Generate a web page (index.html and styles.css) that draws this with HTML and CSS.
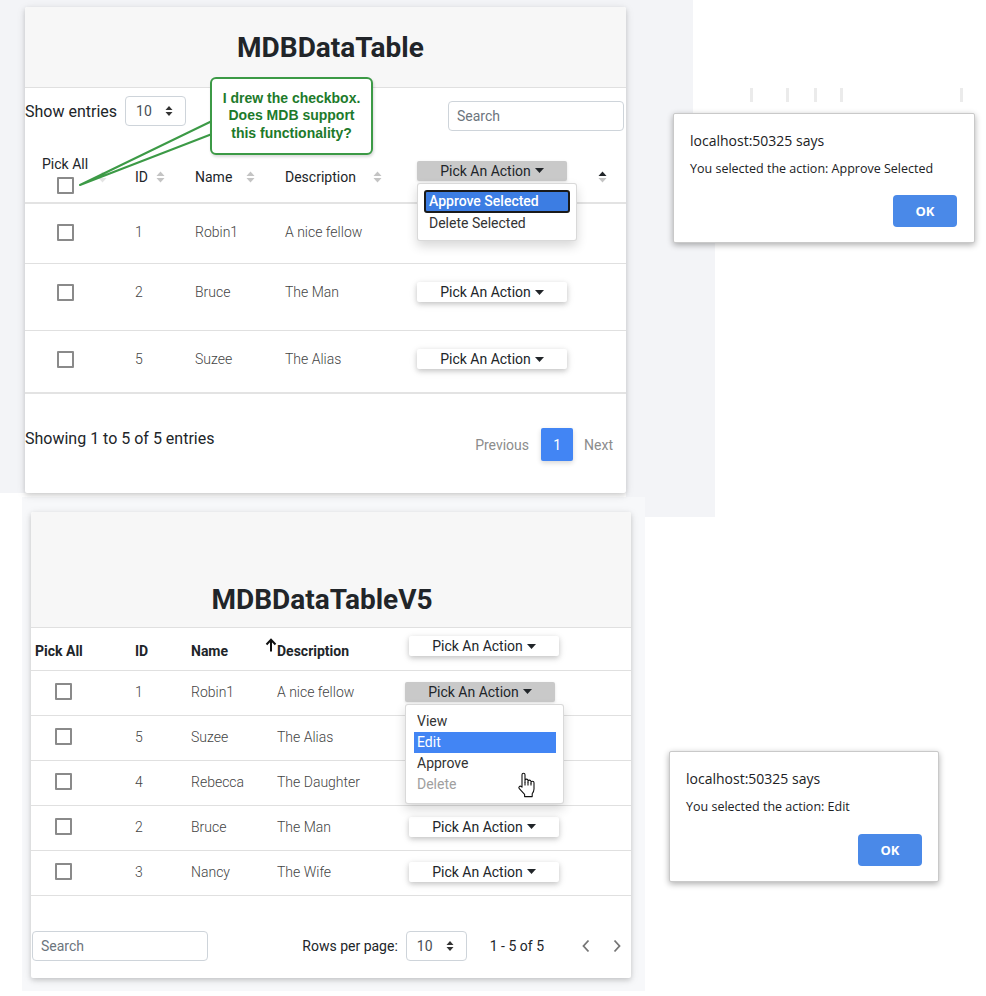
FILE: index.html
```html
<!DOCTYPE html>
<html lang="en">
<head>
<meta charset="utf-8">
<title>MDBDataTable row actions</title>
<link rel="stylesheet" href="styles.css">
</head>
<body>
<div class="canvas">
  <div class="backdrop backdrop--top"></div>
  <div class="backdrop backdrop--side"></div>
  <div class="backdrop backdrop--bottom"></div>

  <!-- Classic MDBDataTable -->
  <section class="card dt1">
    <header class="card-head dt1-head"><h1 class="card-title">MDBDataTable</h1></header>

    <div class="dt1-controls">
      <div class="entries">
        <span>Show entries</span>
        <span class="select">10
          <svg class="select-caret" viewBox="0 0 8 12" width="8" height="12"><path d="M0.5 5 L4 1 L7.5 5Z"/><path d="M0.5 7 L4 11 L7.5 7Z"/></svg>
        </span>
      </div>
      <input class="search dt1-search" type="text" placeholder="Search">
    </div>

    <div class="dt1-row dt1-row--head">
      <div class="dt1-cell dt1-pick">
        <div class="pick-stack">
          <span>Pick All</span>
          <span class="checkbox pick-box"></span>
        </div>
        <svg class="sort sort--faint" viewBox="0 0 9 14" width="9" height="14"><path d="M0.5 6 L4.5 1.5 L8.5 6Z"/><path d="M0.5 8 L4.5 12.5 L8.5 8Z"/></svg>
      </div>
      <div class="dt1-cell dt1-sortable">ID
        <svg class="sort" viewBox="0 0 9 14" width="9" height="14"><path d="M0.5 6 L4.5 1.5 L8.5 6Z"/><path d="M0.5 8 L4.5 12.5 L8.5 8Z"/></svg>
      </div>
      <div class="dt1-cell dt1-sortable">Name
        <svg class="sort" viewBox="0 0 9 14" width="9" height="14"><path d="M0.5 6 L4.5 1.5 L8.5 6Z"/><path d="M0.5 8 L4.5 12.5 L8.5 8Z"/></svg>
      </div>
      <div class="dt1-cell dt1-sortable">Description
        <svg class="sort" viewBox="0 0 9 14" width="9" height="14"><path d="M0.5 6 L4.5 1.5 L8.5 6Z"/><path d="M0.5 8 L4.5 12.5 L8.5 8Z"/></svg>
      </div>
      <div class="dt1-cell dt1-action-head">
        <button class="action-btn action-btn--active action-btn--head">Pick An Action
          <svg class="btn-caret" viewBox="0 0 9 5" width="9" height="5"><path d="M0 0 H9 L4.5 5Z"/></svg>
        </button>
        <svg class="sort sort--on" viewBox="0 0 9 14" width="9" height="14"><path class="sort-up" d="M0.5 6 L4.5 1.5 L8.5 6Z"/><path d="M0.5 8 L4.5 12.5 L8.5 8Z"/></svg>
      </div>
    </div>

    <div class="dt1-row dt1-row--body dt1-row--h60">
      <div class="dt1-cell"><span class="checkbox dt1-box"></span></div>
      <div class="dt1-cell">1</div>
      <div class="dt1-cell">Robin1</div>
      <div class="dt1-cell">A nice fellow</div>
      <div class="dt1-cell dt1-action"></div>
    </div>
    <div class="dt1-row dt1-row--body dt1-row--h67">
      <div class="dt1-cell"><span class="checkbox dt1-box"></span></div>
      <div class="dt1-cell">2</div>
      <div class="dt1-cell">Bruce</div>
      <div class="dt1-cell">The Man</div>
      <div class="dt1-cell dt1-action">
        <button class="action-btn">Pick An Action
          <svg class="btn-caret" viewBox="0 0 9 5" width="9" height="5"><path d="M0 0 H9 L4.5 5Z"/></svg>
        </button>
      </div>
    </div>
    <div class="dt1-row dt1-row--body dt1-row--h63 dt1-row--last">
      <div class="dt1-cell"><span class="checkbox dt1-box"></span></div>
      <div class="dt1-cell">5</div>
      <div class="dt1-cell">Suzee</div>
      <div class="dt1-cell">The Alias</div>
      <div class="dt1-cell dt1-action">
        <button class="action-btn">Pick An Action
          <svg class="btn-caret" viewBox="0 0 9 5" width="9" height="5"><path d="M0 0 H9 L4.5 5Z"/></svg>
        </button>
      </div>
    </div>

    <footer class="dt1-foot">
      <div class="dt1-info">Showing 1 to 5 of 5 entries</div>
      <nav class="pager">
        <span class="pager-link">Previous</span>
        <span class="pager-page">1</span>
        <span class="pager-link">Next</span>
      </nav>
    </footer>
  </section>

  <!-- open bulk action menu -->
  <div class="menu menu--bulk">
    <div class="menu-item menu-item--focus">Approve Selected</div>
    <div class="menu-item">Delete Selected</div>
  </div>

  <!-- note about the select-all checkbox -->
  <svg class="callout-tail" viewBox="0 0 150 85" width="150" height="85"><polygon points="142,11 10,75 142,24"/></svg>
  <div class="callout">I drew the checkbox.<br>Does MDB support<br>this functionality?</div>

  <div class="ticks"><span></span><span></span><span></span><span></span><span></span></div>

  <div class="alert alert--approve">
    <div class="alert-title">localhost:50325 says</div>
    <div class="alert-msg">You selected the action: Approve Selected</div>
    <div class="alert-actions"><button class="alert-ok">OK</button></div>
  </div>

  <!-- MDBDataTableV5 -->
  <section class="card dt2">
    <header class="card-head dt2-head"><h1 class="card-title">MDBDataTableV5</h1></header>

    <div class="dt2-row dt2-row--head">
      <div class="dt2-cell dt2-pick">Pick All</div>
      <div class="dt2-cell">ID</div>
      <div class="dt2-cell">Name</div>
      <div class="dt2-cell dt2-desc-head">
        <svg class="sort-arrow" viewBox="0 0 12 14" width="12" height="14"><path d="M6 13.5 V2 M1.5 6.5 L6 1.8 L10.5 6.5"/></svg>Description
      </div>
      <div class="dt2-cell dt2-action-head">
        <button class="action-btn">Pick An Action
          <svg class="btn-caret" viewBox="0 0 9 5" width="9" height="5"><path d="M0 0 H9 L4.5 5Z"/></svg>
        </button>
      </div>
    </div>

    <div class="dt2-row">
      <div class="dt2-cell"><span class="checkbox dt2-box"></span></div>
      <div class="dt2-cell">1</div>
      <div class="dt2-cell">Robin1</div>
      <div class="dt2-cell dt2-desc">A nice fellow</div>
      <div class="dt2-cell">
        <button class="action-btn action-btn--active action-btn--open">Pick An Action
          <svg class="btn-caret" viewBox="0 0 9 5" width="9" height="5"><path d="M0 0 H9 L4.5 5Z"/></svg>
        </button>
      </div>
    </div>
    <div class="dt2-row">
      <div class="dt2-cell"><span class="checkbox dt2-box"></span></div>
      <div class="dt2-cell">5</div>
      <div class="dt2-cell">Suzee</div>
      <div class="dt2-cell dt2-desc">The Alias</div>
      <div class="dt2-cell"></div>
    </div>
    <div class="dt2-row">
      <div class="dt2-cell"><span class="checkbox dt2-box"></span></div>
      <div class="dt2-cell">4</div>
      <div class="dt2-cell">Rebecca</div>
      <div class="dt2-cell dt2-desc">The Daughter</div>
      <div class="dt2-cell"></div>
    </div>
    <div class="dt2-row">
      <div class="dt2-cell"><span class="checkbox dt2-box"></span></div>
      <div class="dt2-cell">2</div>
      <div class="dt2-cell">Bruce</div>
      <div class="dt2-cell dt2-desc">The Man</div>
      <div class="dt2-cell">
        <button class="action-btn">Pick An Action
          <svg class="btn-caret" viewBox="0 0 9 5" width="9" height="5"><path d="M0 0 H9 L4.5 5Z"/></svg>
        </button>
      </div>
    </div>
    <div class="dt2-row">
      <div class="dt2-cell"><span class="checkbox dt2-box"></span></div>
      <div class="dt2-cell">3</div>
      <div class="dt2-cell">Nancy</div>
      <div class="dt2-cell dt2-desc">The Wife</div>
      <div class="dt2-cell">
        <button class="action-btn">Pick An Action
          <svg class="btn-caret" viewBox="0 0 9 5" width="9" height="5"><path d="M0 0 H9 L4.5 5Z"/></svg>
        </button>
      </div>
    </div>

    <footer class="dt2-foot">
      <input class="search dt2-search" type="text" placeholder="Search">
      <span class="rows-label">Rows per page:</span>
      <span class="select dt2-select">10
        <svg class="select-caret" viewBox="0 0 8 12" width="8" height="12"><path d="M0.5 5 L4 1 L7.5 5Z"/><path d="M0.5 7 L4 11 L7.5 7Z"/></svg>
      </span>
      <span class="range">1 - 5 of 5</span>
      <svg class="chev chev--prev" viewBox="0 0 10 14" width="10" height="14"><path d="M7.5 1.5 L2.5 7 L7.5 12.5"/></svg>
      <svg class="chev chev--next" viewBox="0 0 10 14" width="10" height="14"><path d="M2.5 1.5 L7.5 7 L2.5 12.5"/></svg>
    </footer>
  </section>

  <!-- open row action menu -->
  <div class="menu menu--row">
    <div class="menu-item">View</div>
    <div class="menu-item menu-item--hover">Edit</div>
    <div class="menu-item">Approve</div>
    <div class="menu-item menu-item--disabled">Delete</div>
  </div>

  <svg class="hand" viewBox="0 0 20 26" width="20" height="26">
    <path d="M5 15.2 V2.8 a1.5 1.5 0 0 1 3 0 V10 V8.6 a1.5 1.5 0 0 1 3 0 V10.4 V9.6 a1.5 1.5 0 0 1 3 0 V11 V10.8 a1.5 1.5 0 0 1 3 0 V17 c0 2 -0.8 3.4 -1.8 4.8 V24.6 H7.6 V22.3 L2.3 16.6 a1.4 1.4 0 0 1 2 -2 Z"/>
    <path class="hand-line" d="M8 10 V13.5 M11 10.4 V13.5 M14 11 V13.5"/>
  </svg>

  <div class="alert alert--edit">
    <div class="alert-title">localhost:50325 says</div>
    <div class="alert-msg">You selected the action: Edit</div>
    <div class="alert-actions"><button class="alert-ok">OK</button></div>
  </div>
</div>
</body>
</html>
```
FILE: styles.css
```css
* { box-sizing: border-box; }

html, body { margin: 0; padding: 0; }

body {
  background: #fff;
  font-family: Roboto, "Liberation Sans", Arial, sans-serif;
  color: #212529;
}

.canvas {
  position: relative;
  width: 986px;
  height: 996px;
  overflow: hidden;
}

/* page backgrounds behind the two demo cards */
.backdrop { position: absolute; background: #f3f4f7; }
.backdrop--top { left: 0; top: 0; width: 693px; height: 493px; }
.backdrop--side { left: 626px; top: 243px; width: 89px; height: 274px; }
.backdrop--bottom { left: 22px; top: 497px; width: 623px; height: 494px; background: #f7f8fa; }

/* ---------- shared ---------- */
.card {
  position: absolute;
  display: flex;
  flex-direction: column;
  background: #fff;
  border-radius: 2px;
  box-shadow: 0 2px 5px rgba(0, 0, 0, .14), 0 2px 10px rgba(0, 0, 0, .10);
}

.card-head {
  display: flex;
  justify-content: center;
  background: #f7f7f7;
  border-bottom: 1px solid #e0e0e0;
  border-radius: 2px 2px 0 0;
}

.card-title {
  margin: 0;
  font-size: 28px;
  line-height: 33px;
  font-weight: 700;
  color: #212529;
}

.checkbox {
  display: block;
  width: 17px;
  height: 17px;
  border: 2px solid #8a8a8a;
  border-radius: 1px;
  background: #fff;
}

.select {
  display: flex;
  align-items: center;
  justify-content: space-between;
  width: 61px;
  height: 30px;
  padding: 0 12px 0 10px;
  border: 1px solid #ced4da;
  border-radius: 4px;
  background: #fff;
  font-size: 14px;
  color: #495057;
}

.select-caret { fill: #333; }

.search {
  width: 176px;
  height: 30px;
  padding: 0 8px;
  border: 1px solid #ced4da;
  border-radius: 4px;
  background: #fff;
  font: 14px Roboto, "Liberation Sans", sans-serif;
  color: #495057;
  outline: none;
}
.search::placeholder { color: #6c757d; opacity: 1; }

.sort { fill: #c4c4c4; flex: none; }
.sort--faint { opacity: .45; }
.sort--on .sort-up { fill: #212529; }

.action-btn {
  display: flex;
  align-items: center;
  justify-content: center;
  gap: 4px;
  width: 150px;
  height: 20px;
  padding: 0;
  border: 0;
  border-radius: 2px;
  background: #fff;
  box-shadow: 0 2px 5px rgba(0, 0, 0, .16), 0 2px 8px rgba(0, 0, 0, .10);
  font: 14px Roboto, "Liberation Sans", sans-serif;
  color: #212529;
}
.action-btn--active { background: #c9c9c9; box-shadow: 0 1px 3px rgba(0, 0, 0, .12); }
.btn-caret { fill: #212529; }

/* ---------- MDBDataTable ---------- */
.dt1 { left: 25px; top: 7px; width: 601px; height: 486px; }
.dt1-head { height: 81px; align-items: center; padding-left: 10px; }

.dt1-controls {
  display: flex;
  justify-content: space-between;
  align-items: flex-start;
  height: 47px;
  padding-top: 8px;
}

.entries {
  display: flex;
  align-items: center;
  gap: 8px;
  height: 30px;
  font-size: 16px;
}

.dt1-search { margin: 5px 2px 0 0; }

.dt1-row {
  display: grid;
  grid-template-columns: 110px 60px 90px 127px 1fr;
  border-bottom: 1px solid #e0e0e0;
  font-size: 14px;
}

.dt1-row--head {
  height: 69px;
  padding-top: 16px;
  align-items: center;
  border-bottom: 2px solid #e3e3e3;
}

.dt1-cell { display: flex; align-items: center; }

.dt1-sortable { justify-content: space-between; padding-right: 30px; }

.dt1-pick { padding-left: 17px; padding-right: 28px; justify-content: space-between; }
.pick-stack { display: flex; flex-direction: column; align-items: flex-start; margin-top: -4px; }
.pick-box { margin: 5px 0 0 15px; }

.dt1-action-head { padding-left: 5px; padding-right: 19px; justify-content: space-between; }
.action-btn--head { margin-bottom: 12px; }

.dt1-row--body { align-items: start; padding-top: 18px; }
.dt1-row--body .dt1-cell { height: 20px; font-weight: 300; color: #444; }
.dt1-row--h60 { height: 60px; }
.dt1-row--h67 { height: 67px; }
.dt1-row--h63 { height: 63px; }
.dt1-row--last { border-bottom: 2px solid #e3e3e3; }
.dt1-box { margin-left: 32px; }
.dt1-action { padding-left: 5px; }

.dt1-foot {
  flex: 1;
  display: flex;
  justify-content: space-between;
  align-items: flex-start;
  padding-right: 13px;
}
.dt1-info { margin-top: 35px; font-size: 16px; line-height: 20px; }

.pager { display: flex; align-items: center; margin-top: 34px; }
.pager-link { font-size: 14px; color: #8c8c8c; }
.pager-page {
  display: flex;
  align-items: center;
  justify-content: center;
  width: 32px;
  height: 33px;
  margin: 0 11px 0 12px;
  border-radius: 2px;
  background: #4285f4;
  color: #fff;
  font-size: 14px;
  box-shadow: 0 2px 5px rgba(0, 0, 0, .16);
}

/* ---------- dropdown menus ---------- */
.menu {
  position: absolute;
  background: #fff;
  border: 1px solid rgba(0, 0, 0, .15);
  border-radius: 3px;
  box-shadow: 0 5px 11px rgba(0, 0, 0, .16);
  font-size: 14px;
  color: #333;
}

.menu--bulk { left: 417px; top: 183px; width: 160px; height: 58px; padding: 6px 6px 0 6px; }
.menu--bulk .menu-item { height: 20px; line-height: 20px; padding-left: 5px; }
.menu--bulk .menu-item--focus {
  height: 23px;
  line-height: 19px;
  padding-left: 3px;
  border: 2px solid #1a1a1a;
  border-radius: 3px;
  background: #3c7de3;
  color: #fff;
  font-weight: 500;
}

.menu--row { left: 405px; top: 704px; width: 159px; height: 100px; padding: 6px 7px 0 8px; }
.menu--row .menu-item { height: 21px; line-height: 21px; padding-left: 3px; }
.menu--row .menu-item--hover { background: #4285f4; color: #fff; }
.menu--row .menu-item--disabled { color: #a0a0a0; }

/* ---------- callout note ---------- */
.callout-tail {
  position: absolute;
  left: 70px;
  top: 110px;
  fill: #fff;
  stroke: #3c9a46;
  stroke-width: 2;
  stroke-linejoin: round;
}

.callout {
  position: absolute;
  left: 210px;
  top: 77px;
  width: 163px;
  height: 78px;
  display: flex;
  align-items: center;
  justify-content: center;
  text-align: center;
  border: 2px solid #3c9a46;
  border-radius: 6px;
  background: #fff;
  box-shadow: 1px 2px 3px rgba(0, 0, 0, .15);
  font-family: "Liberation Sans", Arial, sans-serif;
  font-weight: 700;
  font-size: 14px;
  line-height: 17.5px;
  color: #1d7a2b;
}

.ticks { position: absolute; left: 750px; top: 88px; display: flex; }
.ticks span { width: 3px; height: 14px; background: #ebebeb; }
.ticks span + span { margin-left: 33px; }
.ticks span:nth-child(3) { margin-left: 25px; }
.ticks span:nth-child(4) { margin-left: 23px; }
.ticks span:nth-child(5) { margin-left: 117px; }

/* ---------- browser alert dialogs ---------- */
.alert {
  position: absolute;
  display: flex;
  flex-direction: column;
  background: #fff;
  border: 1px solid #c9c9c9;
  border-radius: 2px;
  box-shadow: 0 2px 6px rgba(0, 0, 0, .32);
  padding: 17px 17px 15px 16px;
  font-family: "Open Sans", "Noto Sans", sans-serif;
  color: #202124;
}
.alert--approve { left: 673px; top: 113px; width: 302px; height: 130px; }
.alert--edit { left: 669px; top: 751px; width: 270px; height: 131px; padding-right: 16px; }

.alert-title { font-size: 14px; line-height: 20px; }
.alert-msg { margin-top: 9px; font-size: 12.5px; line-height: 18px; }
.alert-actions { margin-top: auto; display: flex; justify-content: flex-end; }
.alert-ok {
  width: 64px;
  height: 32px;
  border: 0;
  border-radius: 4px;
  background: #4a89e8;
  color: #fff;
  font: 700 13px "Open Sans", "Noto Sans", sans-serif;
}

/* ---------- MDBDataTableV5 ---------- */
.dt2 { left: 31px; top: 512px; width: 600px; height: 466px; }
.dt2-head { height: 116px; align-items: flex-end; padding: 0 18px 11px 0; }

.dt2-row {
  display: grid;
  grid-template-columns: 104px 56px 74px 140px 1fr;
  align-items: center;
  height: 45px;
  padding-bottom: 3px;
  border-bottom: 1px solid #e0e0e0;
  font-size: 14px;
  font-weight: 300;
  color: #444;
}

.dt2-row--head {
  height: 43px;
  padding: 4px 0 0;
  font-weight: 700;
  color: #212529;
}

.dt2-cell { display: flex; align-items: center; }
.dt2-pick { padding-left: 4px; }
.dt2-box { margin-left: 24px; }
.dt2-desc { padding-left: 12px; }
.dt2-row .action-btn { margin-left: 4px; }
.dt2-row .action-btn--open { margin-left: 0; }
.dt2-action-head { align-self: start; margin-top: 4px; }

.sort-arrow {
  margin-bottom: 13px;
  fill: none;
  stroke: #111;
  stroke-width: 2;
}

.dt2-foot {
  flex: 1;
  display: flex;
  align-items: center;
  padding: 18px 9px 0 1px;
  font-size: 14px;
}
.rows-label { margin-left: auto; }
.dt2-select { margin-left: 8px; }
.range { margin-left: 23px; }
.chev { fill: none; stroke: #757575; stroke-width: 1.8; }
.chev--prev { margin-left: 37px; }
.chev--next { margin-left: 21px; }

.hand {
  position: absolute;
  left: 517px;
  top: 772px;
  fill: #fff;
  stroke: #111;
  stroke-width: 1.1;
  stroke-linejoin: round;
}
.hand .hand-line { fill: none; }
```
